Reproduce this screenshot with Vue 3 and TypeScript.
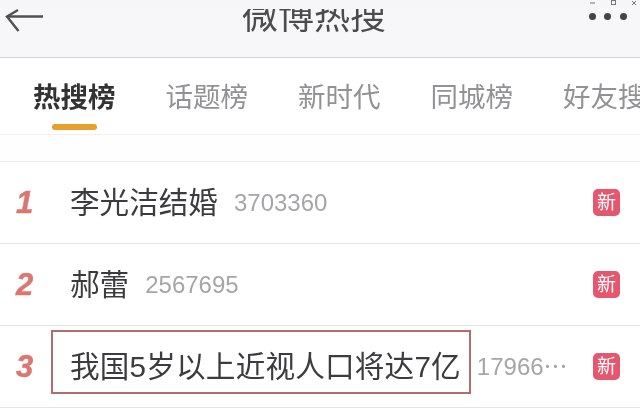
<script setup lang="ts">
const tabs: string[] = ["热搜榜", "话题榜", "新时代", "同城榜", "好友搜"];

const rows: { rank: number; title: string; count: string; boxed?: boolean }[] = [
  { rank: 1, title: "李光洁结婚", count: "3703360" },
  { rank: 2, title: "郝蕾", count: "2567695" },
  { rank: 3, title: "我国5岁以上近视人口将达7亿", count: "17966⋯", boxed: true },
];
</script>

<template>
  <div class="page">
    <header class="top-bar">
      <svg class="back" width="40" height="26" viewBox="0 0 40 26" fill="none" stroke="#505052" stroke-width="2.4">
        <path d="M38 8.5H2" />
        <path d="M13 2L2 8.5L13.5 23" />
      </svg>
      <div class="title">微博热搜</div>
      <div class="dots">
        <i></i><i></i><i></i>
      </div>
      <!-- strip of the screenshot tool, it covers the top of the title -->
      <div class="top-strip"></div>
      <svg class="win-btns" width="50" height="6" viewBox="0 0 50 6" fill="none" stroke="#777" stroke-width="1">
        <path d="M0 3H5" />
        <rect x="21.5" y="0.5" width="4" height="4" />
        <path d="M42 1L46 5M46 1L42 5" />
      </svg>
    </header>

    <nav class="tabs">
      <div v-for="(tab, i) in tabs" :key="tab" class="tab" :class="{ active: i === 0 }">
        {{ tab }}
      </div>
    </nav>

    <div class="spacer"></div>

    <div class="list">
      <div v-for="row in rows" :key="row.rank" class="row">
        <span class="rank">{{ row.rank }}</span>
        <span class="name" :class="{ boxed: row.boxed }">{{ row.title }}</span>
        <span class="count">{{ row.count }}</span>
        <span class="badge">新</span>
      </div>
    </div>
  </div>
</template>

<style>
html,
body {
  margin: 0;
  background: #fff;
  overflow: hidden;
}
</style>

<style scoped>
.page {
  width: 640px;
  height: 409px;
  overflow: hidden;
  background: #fff;
  font-family: "Liberation Sans", "Noto Sans CJK SC", sans-serif;
  filter: blur(0.35px);
}

.top-bar {
  position: relative;
  height: 58px;
  box-sizing: border-box;
  display: flex;
  justify-content: space-between;
  padding: 0 13px 0 5px;
  overflow: hidden;
  background: #f7f7f9;
  border-bottom: 1px solid #d2d2d4;
}

.back {
  margin-top: 8px;
}

.title {
  margin: -4px 6px 0 0;
  font-size: 36px;
  line-height: 42px;
  color: #4c4c4e;
}

.dots {
  display: flex;
  gap: 8.5px;
  margin-top: 13px;
  height: 7px;
}

.dots i {
  width: 7px;
  height: 7px;
  border-radius: 50%;
  background: #444;
}

.top-strip {
  position: absolute;
  left: 0;
  right: 0;
  top: 0;
  height: 9px;
  background: #f6f6f7;
}

.win-btns {
  position: absolute;
  top: 0;
  right: 0;
}

.tabs {
  display: flex;
  gap: 50px;
  height: 77px;
  box-sizing: border-box;
  padding: 23px 0 0 33px;
  overflow: hidden;
  background: #fff;
  border-bottom: 1px solid #f0f0f0;
}

.tab {
  position: relative;
  flex: none;
  font-size: 27.5px;
  line-height: 34px;
  color: #929294;
}

.tab.active {
  color: #333;
  font-weight: 700;
}

.tab.active::after {
  content: "";
  position: absolute;
  left: 19px;
  top: 43px;
  width: 45px;
  height: 6px;
  border-radius: 3px;
  background: #e6a02c;
}

.spacer {
  height: 26px;
  background: #fefefe;
}

.list {
  border-top: 1px solid #ececee;
}

.row {
  display: flex;
  align-items: center;
  height: 82px;
  box-sizing: border-box;
  padding: 0 20px 0 16px;
  background: #fff;
  border-bottom: 1px solid #e4e4e6;
}

.rank {
  width: 54px;
  flex: none;
  font-size: 31px;
  font-weight: 700;
  font-style: italic;
  color: #dc7670;
  -webkit-text-stroke: 0.5px #dc7670;
}

.name {
  position: relative;
  flex: none;
  font-size: 29.6px;
  line-height: 36px;
  color: #3c3c3e;
}

.name.boxed {
  letter-spacing: 0.2px;
}

.name.boxed::after {
  content: "";
  position: absolute;
  left: -19px;
  right: -10px;
  top: -19px;
  bottom: -9px;
  border: 2px solid #b56a6e;
}

.count {
  margin-left: 16px;
  font-size: 24px;
  line-height: 28px;
  color: #a6a6a8;
}

.badge {
  margin-left: auto;
  width: 27px;
  height: 27px;
  border-radius: 5px;
  background: #e5566f;
  color: #fff;
  font-size: 19px;
  line-height: 27px;
  text-align: center;
}
</style>
